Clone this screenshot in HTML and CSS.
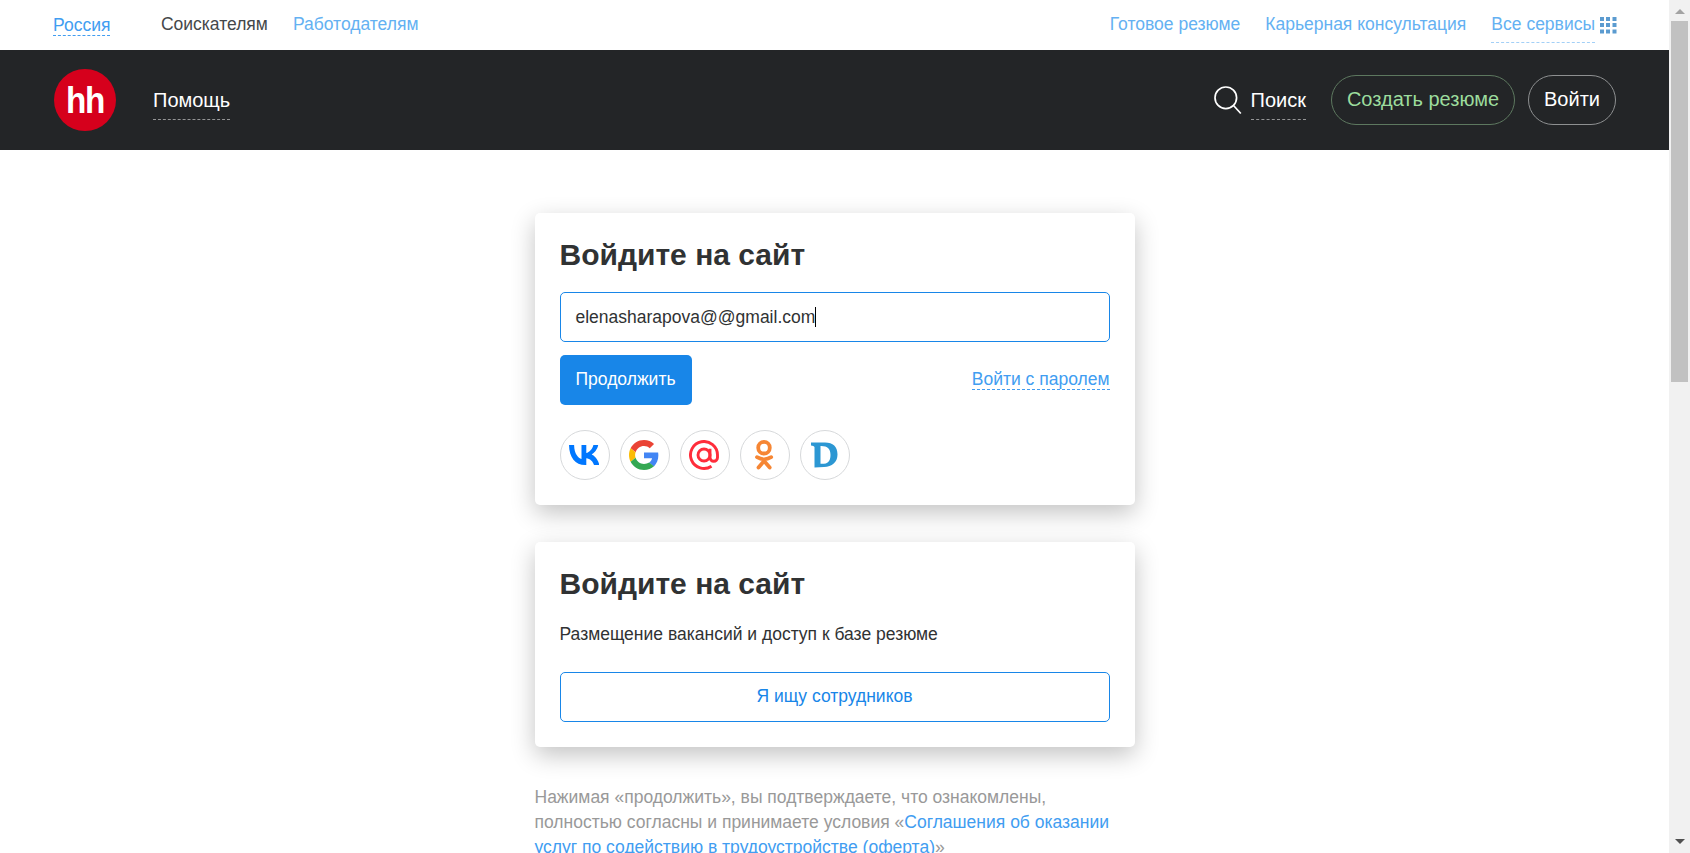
FILE: index.html
```html
<!DOCTYPE html>
<html lang="ru">
<head>
<meta charset="utf-8">
<title>Вход на сайт</title>
<link rel="stylesheet" href="styles.css">
</head>
<body>
<div class="page">
  <nav class="topbar">
    <a class="region">Россия</a>
    <a class="tab-active">Соискателям</a>
    <a class="tab">Работодателям</a>
    <span class="spacer"></span>
    <a class="service">Готовое резюме</a>
    <a class="service">Карьерная консультация</a>
    <a class="service all">Все сервисы</a>
    <svg class="grid-icon" width="17" height="17" viewBox="0 0 17 17" fill="#5b9bd0"><path d="M0 0h4v4H0zM6 0h4v4H6zM12.500 0h4v4h-4zM0 6h4v4H0zM6 6h4v4H6zM12.500 6h4v4h-4zM0 12.500h4v4H0zM6 12.500h4v4H6zM12.500 12.500h4v4h-4z"/></svg>
  </nav>
  <header class="header">
    <div class="logo"><span>hh</span></div>
    <a class="help">Помощь</a>
    <span class="spacer"></span>
    <svg class="search-icon" width="29" height="29" viewBox="0 0 29 29" fill="none" stroke="#fff" stroke-width="1.700"><circle cx="11.800" cy="11.800" r="10.800"/><path d="M19.500 19.500l7.300 8"/></svg>
    <a class="search">Поиск</a>
    <a class="pill create">Создать резюме</a>
    <a class="pill login">Войти</a>
  </header>
  <main class="content">
    <section class="card">
      <h1 class="title">Войдите на сайт</h1>
      <div class="field"><span class="email">elenasharapova@@gmail.com</span><i class="caret"></i></div>
      <div class="actions">
        <button class="primary">Продолжить</button>
        <a class="password">Войти с паролем</a>
      </div>
      <div class="socials">
        <a class="social"><svg width="30" height="20" viewBox="0 0 30 20" fill="#07f"><path d="M16.300 20C6.100 20 .3 12.500 0 0h5.100c.2 9.200 4.200 13.100 7.400 13.900V0h4.800v7.900c3-.3 6.100-3.900 7.100-7.900h4.800c-.8 4.500-4.100 8.100-6.500 9.500 2.400 1.100 6.200 4.100 7.600 10.500H25c-1.100-3.600-4-6.300-7.700-6.700V20z"/></svg></a>
        <a class="social"><svg width="30" height="30" viewBox="0 0 48 48"><path fill="#ea4335" d="M24 9.500c3.540 0 6.710 1.220 9.210 3.600l6.850-6.850C35.900 2.380 30.470 0 24 0 14.620 0 6.510 5.380 2.560 13.220l7.980 6.190C12.430 13.720 17.740 9.500 24 9.500z"/><path fill="#4285f4" d="M46.980 24.550c0-1.570-.15-3.090-.38-4.550H24v9.020h12.940c-.58 2.960-2.260 5.480-4.780 7.180l7.730 6c4.510-4.180 7.090-10.360 7.090-17.650z"/><path fill="#fbbc05" d="M10.530 28.590c-.48-1.450-.76-2.990-.76-4.590s.27-3.140.76-4.590l-7.980-6.190C.92 16.460 0 20.120 0 24s.92 7.540 2.560 10.780l7.970-6.190z"/><path fill="#34a853" d="M24 48c6.480 0 11.930-2.130 15.890-5.810l-7.730-6c-2.150 1.450-4.920 2.300-8.160 2.300-6.260 0-11.570-4.220-13.470-9.910l-7.980 6.190C6.510 42.620 14.620 48 24 48z"/></svg></a>
        <a class="social"><svg width="30" height="30" viewBox="0 0 30 30" fill="none" stroke="#ff2d3b" stroke-width="2.900"><circle cx="15" cy="15" r="6"/><path d="M21 8.800v8.700a3.700 3.700 0 0 0 7.500 0V15A13.500 13.500 0 1 0 22.500 26.200"/></svg></a>
        <a class="social"><svg width="20" height="30" viewBox="0 0 20 30" fill="none" stroke="#f68634" stroke-width="3.800" stroke-linecap="round"><circle cx="10" cy="7.700" r="5.800"/><path d="M3 17.200q7 4.200 14.200 0M10.100 19.500v1M10.100 21L4.500 27.500M10.100 21l5.600 6.500"/></svg></a>
        <a class="social"><svg width="28" height="26" viewBox="0 0 28 26" fill="#2c97d3" fill-rule="evenodd"><path d="M1 .5h14C23 .5 27.500 4.500 27.500 12.500S22 24.500 14 25L4.500 25.500V5Q4 3.800 1 3.500zM10.500 4v17.800c7 .5 10-2.500 10-8.900S17.500 3.800 10.500 4z"/></svg></a>
      </div>
    </section>
    <section class="card employer">
      <h2 class="title">Войдите на сайт</h2>
      <p class="lead">Размещение вакансий и доступ к базе резюме</p>
      <button class="outline">Я ищу сотрудников</button>
    </section>
    <p class="terms">Нажимая «продолжить», вы подтверждаете, что ознакомлены,<br>полностью согласны и принимаете условия «<a>Соглашения об оказании</a><br><a>услуг по содействию в трудоустройстве (оферта)</a>»</p>
  </main>
</div>
<aside class="scrollbar"><i class="up"></i><i class="thumb"></i><i class="down"></i></aside>
</body>
</html>
```
FILE: styles.css
```css
* { box-sizing: border-box; }
html, body { margin: 0; height: 100%; overflow: hidden; }
body { display: flex; background: #fff; color: #303233; font: 17.5px/25px "Liberation Sans", Arial, sans-serif; }
h1, h2, p { margin: 0; }
button { font: inherit; }
.page { flex: 1; height: 853px; overflow: hidden; }
.spacer { flex: 1; }
.topbar { height: 50px; display: flex; align-items: flex-start; padding: 12px 52px 0 53px; white-space: nowrap; color: #64b1f2; }
.region { margin: 1px 50.5px 0 0; height: 23px; line-height: 25px; color: #419df1; border-bottom: 1px dashed #419df1; }
.tab-active { margin-right: 25px; color: #45484a; }
.service { margin-right: 25px; }
.all { height: 31px; border-bottom: 1px dashed #a3d0f7; margin-right: 5px; }
.grid-icon { margin-top: 5px; }
.header { height: 100px; background: #232527; display: flex; align-items: center; padding: 0 53px 0 54px; color: #fff; font-size: 20px; white-space: nowrap; }
.logo { width: 62px; height: 62px; border-radius: 50%; background: #d6001c; margin-right: 37px; display: flex; justify-content: center; font-weight: 700; font-size: 37px; line-height: 63px; letter-spacing: -1.5px; }
.logo span { transform: scaleX(.9); }
.help, .search { height: 38px; margin-top: 2px; line-height: 37px; border-bottom: 1px dashed #949596; }
.search-icon { margin-right: 8px; }
.pill { height: 50px; border: 1px solid #8e9091; border-radius: 25px; display: flex; justify-content: center; line-height: 46px; margin-left: 13px; width: 88px; }
.create { width: 184px; margin-left: 25px; color: #9cdc9d; border-color: #5d785f; }
.content { width: 600px; margin: 63px auto 0; }
.card { height: 292px; padding: 25px; border-radius: 5px; background: #fff; box-shadow: 0 8px 25px rgba(0, 0, 0, .24); }
.employer { height: 205px; margin-top: 37px; }
.title { font-size: 30px; line-height: 33px; height: 54px; font-weight: 700; white-space: nowrap; }
.field { height: 50px; border: 1px solid #1886e8; border-radius: 5px; padding-left: 15px; display: flex; align-items: center; }
.caret { width: 1px; height: 20px; background: #000; }
.actions { display: flex; justify-content: space-between; margin-top: 13px; }
.primary { width: 132px; height: 50px; padding: 0 0 2px; border: 0; border-radius: 5px; background: #1886e8; color: #fff; }
.password { margin-top: 12px; height: 23px; line-height: 24px; color: #419df1; border-bottom: 1px dashed #419df1; }
.socials { display: flex; gap: 10px; margin-top: 25px; }
.social { width: 50px; height: 50px; padding-right: 1px; border: 1px solid #d7d9db; border-radius: 50%; display: flex; align-items: center; justify-content: center; }
.lead { height: 51px; line-height: 27px; white-space: nowrap; }
.outline { display: block; width: 550px; height: 50px; border: 1px solid #1886e8; border-radius: 5px; background: #fff; color: #1886e8; padding: 0 0 1px; }
.terms { margin-top: 38px; color: #999; white-space: nowrap; }
.terms a { color: #419df1; }
.scrollbar { width: 21px; height: 853px; background: #f1f1f1; display: flex; flex-direction: column; align-items: center; }
.up { margin-top: 9px; border: 5px solid transparent; border-top: 0; border-bottom-color: #a3a3a3; }
.thumb { width: 17px; height: 361px; margin-top: 7px; background: #c1c1c1; }
.down { margin: auto 0 9px; border: 5px solid transparent; border-bottom: 0; border-top-color: #505050; }
```
